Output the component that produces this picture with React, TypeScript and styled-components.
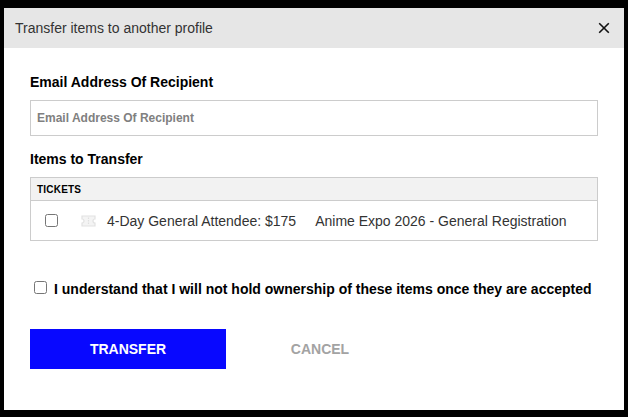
import styled, { createGlobalStyle } from "styled-components";

const GlobalStyle = createGlobalStyle`
  html, body {
    margin: 0;
    padding: 0;
    background: #000;
    font-family: "Liberation Sans", Arial, sans-serif;
  }
`;

const Backdrop = styled.div`
  width: 628px;
  height: 417px;
  padding: 8px 4px 7px 4px;
  box-sizing: border-box;
  background: #000;
  overflow: hidden;
`;

const Modal = styled.div`
  height: 402px;
  background: #fff;
  display: flex;
  flex-direction: column;
`;

const Header = styled.div`
  height: 40px;
  flex: none;
  background: #e6e6e6;
  display: flex;
  align-items: center;
  justify-content: space-between;
  padding: 0 14px 0 11px;
  font-size: 14px;
  color: #333;
`;

const CloseButton = styled.button`
  border: 0;
  background: none;
  padding: 0;
  width: 12px;
  height: 12px;
  display: flex;
  cursor: pointer;
`;

const Body = styled.div`
  padding: 26px 26px 0 26px;
  display: flex;
  flex-direction: column;
`;

const Label = styled.div`
  font-size: 14px;
  line-height: 16px;
  font-weight: 700;
  color: #000;
`;

const EmailInput = styled.input`
  display: block;
  box-sizing: border-box;
  width: 100%;
  height: 36px;
  margin: 10px 0 15px;
  padding: 0 6px;
  border: 1px solid #ccc;
  outline: none;
  font-family: inherit;
  font-size: 12px;
  font-weight: 700;
  &::placeholder {
    color: #808080;
    opacity: 1;
  }
`;

const ItemsTable = styled.div`
  margin-top: 10px;
  border: 1px solid #ccc;
`;

const SectionHead = styled.div`
  height: 22px;
  background: #f2f2f2;
  border-bottom: 1px solid #ccc;
  padding: 0 6px;
  display: flex;
  align-items: center;
  font-size: 10px;
  font-weight: 700;
  letter-spacing: 0.2px;
  color: #000;
`;

const ItemRow = styled.div`
  height: 39px;
  display: flex;
  align-items: center;
  font-size: 14px;
  color: #333;
`;

const Check = styled.input.attrs({ type: "checkbox" })`
  appearance: none;
  box-sizing: border-box;
  flex: none;
  width: 13px;
  height: 13px;
  margin: 0;
  background: #fff;
  border: 1px solid #767676;
  border-radius: 2.5px;
`;

const RowCheck = styled(Check)`
  margin-left: 14px;
`;

const TicketIcon = styled.svg`
  flex: none;
  width: 15px;
  height: 12px;
  margin: 0 11px 0 23px;
`;

const EventName = styled.span`
  margin-left: 19px;
`;

const Agreement = styled.label`
  display: flex;
  align-items: center;
  margin: 40px 0 0 4px;
  font-size: 14px;
  line-height: 16px;
  font-weight: 700;
  color: #000;
  white-space: nowrap;
  ${Check} {
    margin: -3px 7px 0 0;
  }
`;

const Actions = styled.div`
  display: flex;
  margin-top: 32px;
`;

const ActionButton = styled.button<{ $primary?: boolean }>`
  width: ${(p) => (p.$primary ? "196px" : "188px")};
  height: 40px;
  border: 0;
  padding: 0;
  font-family: inherit;
  font-size: 14px;
  font-weight: 700;
  background: ${(p) => (p.$primary ? "#0808ff" : "transparent")};
  color: ${(p) => (p.$primary ? "#fff" : "#a3a3a3")};
`;

const App = () => {
  return (
    <Backdrop>
      <GlobalStyle />
      <Modal>
        <Header>
          <span>Transfer items to another profile</span>
          <CloseButton aria-label="Close">
            <svg width="12" height="12" viewBox="0 0 12 12">
              <path d="M1.2 1.2 L10.8 10.8 M10.8 1.2 L1.2 10.8" stroke="#111" strokeWidth="1.6" fill="none" />
            </svg>
          </CloseButton>
        </Header>
        <Body>
          <Label>Email Address Of Recipient</Label>
          <EmailInput placeholder="Email Address Of Recipient" />
          <Label>Items to Transfer</Label>
          <ItemsTable>
            <SectionHead>TICKETS</SectionHead>
            <ItemRow>
              <RowCheck />
              <TicketIcon viewBox="0 0 15 12">
                <path
                  d="M1 1 H14 V4 A2 2 0 0 0 14 8 V11 H1 V8 A2 2 0 0 0 1 4 Z"
                  fill="#f4f4f4"
                  stroke="#e2e2e2"
                  strokeWidth="1.2"
                />
                <path d="M7.5 2.5 V9.5" stroke="#e0e0e0" strokeWidth="1.2" strokeDasharray="1.5 1" />
              </TicketIcon>
              <span>4-Day General Attendee: $175</span>
              <EventName>Anime Expo 2026 - General Registration</EventName>
            </ItemRow>
          </ItemsTable>
          <Agreement>
            <Check />
            I understand that I will not hold ownership of these items once they are accepted
          </Agreement>
          <Actions>
            <ActionButton $primary>TRANSFER</ActionButton>
            <ActionButton>CANCEL</ActionButton>
          </Actions>
        </Body>
      </Modal>
    </Backdrop>
  );
};

export default App;
